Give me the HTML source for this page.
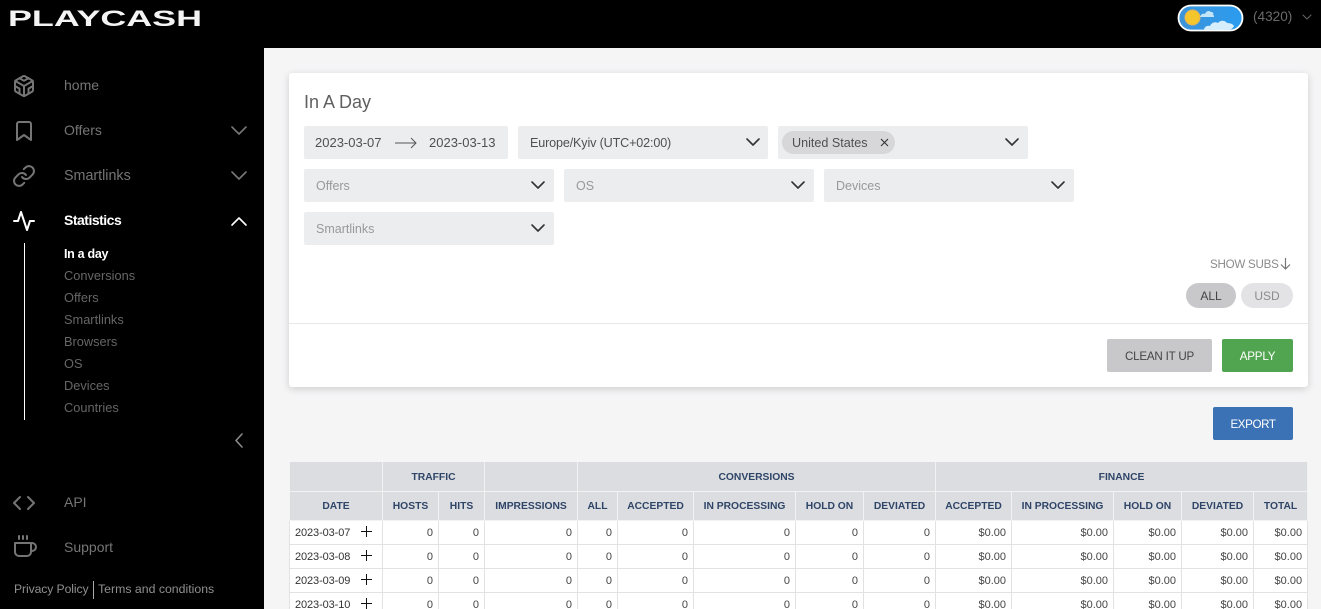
<!DOCTYPE html>
<html lang="en">
<head>
<meta charset="utf-8">
<title>PlayCash</title>
<style>
*{box-sizing:border-box}
html,body{margin:0;padding:0;width:1321px;height:609px;overflow:hidden;background:#f5f5f6;font-family:"Liberation Sans",sans-serif;color:#444}
#wrap{position:relative;width:1321px;height:609px;overflow:hidden;background:#f5f5f6}
.t{position:absolute;white-space:nowrap;line-height:16px;height:16px}
.a{position:absolute}
#top{left:0;top:0;width:1321px;height:48px;background:#000}
#side{left:0;top:0;width:264px;height:609px;background:#000}
.nav{font-size:14px;color:#757575;left:64px}
.sub{font-size:12.8px;color:#666;left:64px}
svg{position:absolute;overflow:visible}
.ic{fill:none;stroke:#757575;stroke-width:2;stroke-linecap:round;stroke-linejoin:round}
.chev{fill:none;stroke-width:1.6;stroke-linecap:round;stroke-linejoin:round}
#card{left:289px;top:73px;width:1019px;height:314px;background:#fff;border-radius:3px;box-shadow:0 2px 8px rgba(0,0,0,.16)}
.f{position:absolute;background:#ecedef;border-radius:2px;height:33px}
.ph{font-size:12.5px;color:#999}
.val{font-size:12.6px;color:#505050}
.btn{position:absolute;border-radius:2px;height:33px;font-size:11.6px;line-height:33px;text-align:center;padding-top:1px;letter-spacing:-.2px}
#tb{position:absolute;left:289px;top:462px;width:1018px;border-collapse:collapse;table-layout:fixed;font-size:11px}
#tb th{background:#dcdde0;color:#2f4568;font-weight:700;font-size:10.3px;height:29px;padding:1px 0 0;border:1px solid #f2f2f3;border-top:0;text-align:center;white-space:nowrap}
#tb tr:first-child th{padding-top:2px}
#tb td{background:#fff;color:#444;height:24px;padding:2px 5px 0 0;border:1px solid #e2e2e4;border-top:0;text-align:right;white-space:nowrap;font-size:11px}
#tb td.d{text-align:left;padding-left:5px;position:relative;color:#333;letter-spacing:-.1px}
.p{position:absolute;left:71px;top:5px;width:11px;height:11px}
.p:before{content:"";position:absolute;left:0;top:5px;width:11px;height:1.3px;background:#111}
.p:after{content:"";position:absolute;left:5px;top:0;width:1.3px;height:11px;background:#111}
</style>
</head>
<body>
<div id="wrap">
<div class="a" id="top"></div>
<div class="a" id="side"></div>

<svg style="left:0;top:0" width="220" height="36">
<text x="8" y="26" font-family="Liberation Sans" font-weight="700" font-size="22" fill="#f4f4f4" textLength="194" lengthAdjust="spacingAndGlyphs">PLAYCASH</text>
</svg>

<!-- toggle -->
<svg style="left:1177px;top:4px" width="67" height="28" viewBox="0 0 67 28">
<defs><linearGradient id="g" x1="0" x2="1" y1="0" y2="0"><stop offset="0" stop-color="#3d93d8"/><stop offset="1" stop-color="#2b9cf0"/></linearGradient></defs>
<rect x="1.5" y="1.5" width="64" height="25" rx="12.5" fill="url(#g)" stroke="#fff" stroke-width="1.8"/>
<circle cx="15.5" cy="13.5" r="7.5" fill="#f5c62c" stroke="#e6b458" stroke-width="1"/>
<path d="M23 13c1-3 3-4 5-3 1-3 4-4 6-2 2 0 3 1 2 3 1 0 1 1 1 2z" fill="#c4e5f8"/>
<path d="M27 26c0-3 3-5 6-4 1-3 5-5 8-3 2-3 7-3 9 0 3 0 6 1 7 3-1 2-3 4-6 4z" fill="#d6eefb"/>
</svg>
<div class="t" style="left:1253px;top:9px;font-size:13.6px;color:#6a6a6a">(4320)</div>
<svg style="left:1302px;top:14px" width="10" height="7"><path d="M1 1l4 4 4-4" class="chev" stroke="#666" style="stroke-width:1"/></svg>

<!-- nav -->
<svg class="ic" style="left:12px;top:74px" width="24" height="24" viewBox="0 0 24 24"><path d="M21 16V8a2 2 0 0 0-1-1.73l-7-4a2 2 0 0 0-2 0l-7 4A2 2 0 0 0 3 8v8a2 2 0 0 0 1 1.73l7 4a2 2 0 0 0 2 0l7-4A2 2 0 0 0 21 16z"/><path d="M7.5 4.21L12 6.81l4.5-2.6M7.5 19.79V14.6L3 12M21 12l-4.5 2.6v5.19M3.27 6.96L12 12.01l8.73-5.05M12 22.08V12"/></svg>
<div class="t nav" style="top:77px">home</div>

<svg class="ic" style="left:12px;top:119px" width="24" height="24" viewBox="0 0 24 24"><path d="M19 21l-7-5-7 5V5a2 2 0 0 1 2-2h10a2 2 0 0 1 2 2z"/></svg>
<div class="t nav" style="top:122px">Offers</div>
<svg style="left:231px;top:126px" width="16" height="10"><path d="M1 1l7 7 7-7" class="chev" stroke="#777"/></svg>

<svg class="ic" style="left:12px;top:164px" width="24" height="24" viewBox="0 0 24 24"><path d="M10 13a5 5 0 0 0 7.54.54l3-3a5 5 0 0 0-7.07-7.07l-1.72 1.71"/><path d="M14 11a5 5 0 0 0-7.54-.54l-3 3a5 5 0 0 0 7.07 7.07l1.71-1.71"/></svg>
<div class="t nav" style="top:168px;font-size:14.3px">Smartlinks</div>
<svg style="left:231px;top:171px" width="16" height="10"><path d="M1 1l7 7 7-7" class="chev" stroke="#777"/></svg>

<svg class="ic" style="left:12px;top:209px;stroke:#fff" width="24" height="24" viewBox="0 0 24 24"><path d="M22 12h-4l-3 9L9 3l-3 9H2"/></svg>
<div class="t nav" style="top:212px;color:#fff;font-weight:700;letter-spacing:-.5px">Statistics</div>
<svg style="left:231px;top:216px" width="16" height="10"><path d="M1 9l7-7 7 7" class="chev" stroke="#fff"/></svg>

<div class="a" style="left:24px;top:243px;width:1px;height:177px;background:#fff"></div>
<div class="t sub" style="top:246px;color:#fff;font-weight:700;font-size:12.5px;letter-spacing:-.3px">In a day</div>
<div class="t sub" style="top:268px">Conversions</div>
<div class="t sub" style="top:290px">Offers</div>
<div class="t sub" style="top:312px">Smartlinks</div>
<div class="t sub" style="top:334px">Browsers</div>
<div class="t sub" style="top:356px">OS</div>
<div class="t sub" style="top:378px">Devices</div>
<div class="t sub" style="top:400px">Countries</div>

<svg style="left:234px;top:433px" width="10" height="15"><path d="M8 1L2 7.5 8 14" class="chev" stroke="#8a8a8a"/></svg>

<svg class="ic" style="left:12px;top:491px" width="24" height="24" viewBox="0 0 24 24"><path d="M16 18l6-6-6-6M8 6l-6 6 6 6"/></svg>
<div class="t nav" style="top:494px">API</div>
<svg class="ic" style="left:13px;top:535px" width="24" height="24" viewBox="0 0 24 24"><path d="M18 8h1a4 4 0 0 1 0 8h-1"/><path d="M2 8h16v9a4 4 0 0 1-4 4H6a4 4 0 0 1-4-4V8z"/><path d="M6 1v3M10 1v3M14 1v3"/></svg>
<div class="t nav" style="top:539px">Support</div>

<div class="t" style="left:14px;top:581px;font-size:12.2px;color:#8f8f8f;letter-spacing:-.1px">Privacy Policy</div>
<div class="a" style="left:93px;top:581px;width:1px;height:18px;background:#aaa"></div>
<div class="t" style="left:98px;top:581px;font-size:12.3px;color:#8f8f8f">Terms and conditions</div>

<!-- card -->
<div class="a" id="card"></div>
<div class="t" style="left:304px;top:94px;font-size:18px;color:#606060">In A Day</div>

<div class="f" style="left:304px;top:126px;width:204px"></div>
<div class="t val" style="left:315px;top:135px;font-size:13px">2023-03-07</div>
<svg style="left:394px;top:136px" width="24" height="14"><path d="M1 7h21M17 2l5 5-5 5" fill="none" stroke="#555" stroke-width="1"/></svg>
<div class="t val" style="left:429px;top:135px;font-size:13px">2023-03-13</div>

<div class="f" style="left:518px;top:126px;width:250px"></div>
<div class="t val" style="left:530px;top:135px;letter-spacing:-.15px">Europe/Kyiv (UTC+02:00)</div>
<svg style="left:746px;top:138px" width="14" height="9"><path d="M1 1l6 6 6-6" class="chev" stroke="#333"/></svg>

<div class="f" style="left:778px;top:126px;width:250px"></div>
<div class="a" style="left:782px;top:131px;width:113px;height:23px;border-radius:12px;background:#d7d7d9"></div>
<div class="t val" style="left:792px;top:135px">United States</div>
<svg style="left:880px;top:138px" width="9" height="9"><path d="M1 1l7 7M8 1L1 8" fill="none" stroke="#333" stroke-width="1.1"/></svg>
<svg style="left:1005px;top:138px" width="14" height="9"><path d="M1 1l6 6 6-6" class="chev" stroke="#333"/></svg>

<div class="f" style="left:304px;top:169px;width:250px"></div>
<div class="t ph" style="left:316px;top:178px">Offers</div>
<svg style="left:531px;top:181px" width="14" height="9"><path d="M1 1l6 6 6-6" class="chev" stroke="#333"/></svg>

<div class="f" style="left:564px;top:169px;width:250px"></div>
<div class="t ph" style="left:576px;top:178px">OS</div>
<svg style="left:791px;top:181px" width="14" height="9"><path d="M1 1l6 6 6-6" class="chev" stroke="#333"/></svg>

<div class="f" style="left:824px;top:169px;width:250px"></div>
<div class="t ph" style="left:836px;top:178px">Devices</div>
<svg style="left:1051px;top:181px" width="14" height="9"><path d="M1 1l6 6 6-6" class="chev" stroke="#333"/></svg>

<div class="f" style="left:304px;top:212px;width:250px"></div>
<div class="t ph" style="left:316px;top:221px">Smartlinks</div>
<svg style="left:531px;top:224px" width="14" height="9"><path d="M1 1l6 6 6-6" class="chev" stroke="#333"/></svg>

<div class="t" style="left:1210px;top:257px;font-size:11.6px;color:#8a8a8a;letter-spacing:-.25px">SHOW SUBS</div>
<svg style="left:1280px;top:258px" width="11" height="12"><path d="M5.5 0v11M1 6.5l4.5 4.5L10 6.5" fill="none" stroke="#777" stroke-width="1.2"/></svg>

<div class="a" style="left:1186px;top:283px;width:50px;height:25px;border-radius:13px;background:#c8c8ca;text-align:center;line-height:26px;font-size:12px;color:#444">ALL</div>
<div class="a" style="left:1241px;top:283px;width:52px;height:25px;border-radius:13px;background:#e3e3e5;text-align:center;line-height:26px;font-size:12px;color:#8a8a90">USD</div>

<div class="a" style="left:289px;top:323px;width:1019px;height:1px;background:#e8e8e8"></div>

<div class="btn" style="left:1107px;top:339px;width:105px;background:#c8c8ca;color:#444">CLEAN IT UP</div>
<div class="btn" style="left:1222px;top:339px;width:71px;background:#52a550;color:#fff">APPLY</div>
<div class="btn" style="left:1213px;top:407px;width:80px;background:#3b71b5;color:#fff;letter-spacing:-.4px">EXPORT</div>

<!-- table -->
<table id="tb">
<colgroup>
<col style="width:93px"><col style="width:56px"><col style="width:46px"><col style="width:93px"><col style="width:40px"><col style="width:76px"><col style="width:102px"><col style="width:68px"><col style="width:72px"><col style="width:76px"><col style="width:102px"><col style="width:68px"><col style="width:72px"><col style="width:54px">
</colgroup>
<tr><th></th><th colspan="2">TRAFFIC</th><th></th><th colspan="5">CONVERSIONS</th><th colspan="5">FINANCE</th></tr>
<tr><th>DATE</th><th>HOSTS</th><th>HITS</th><th>IMPRESSIONS</th><th>ALL</th><th>ACCEPTED</th><th>IN PROCESSING</th><th>HOLD ON</th><th>DEVIATED</th><th>ACCEPTED</th><th>IN PROCESSING</th><th>HOLD ON</th><th>DEVIATED</th><th>TOTAL</th></tr>
<tr><td class="d">2023-03-07<span class="p"></span></td><td>0</td><td>0</td><td>0</td><td>0</td><td>0</td><td>0</td><td>0</td><td>0</td><td>$0.00</td><td>$0.00</td><td>$0.00</td><td>$0.00</td><td>$0.00</td></tr>
<tr><td class="d">2023-03-08<span class="p"></span></td><td>0</td><td>0</td><td>0</td><td>0</td><td>0</td><td>0</td><td>0</td><td>0</td><td>$0.00</td><td>$0.00</td><td>$0.00</td><td>$0.00</td><td>$0.00</td></tr>
<tr><td class="d">2023-03-09<span class="p"></span></td><td>0</td><td>0</td><td>0</td><td>0</td><td>0</td><td>0</td><td>0</td><td>0</td><td>$0.00</td><td>$0.00</td><td>$0.00</td><td>$0.00</td><td>$0.00</td></tr>
<tr><td class="d">2023-03-10<span class="p"></span></td><td>0</td><td>0</td><td>0</td><td>0</td><td>0</td><td>0</td><td>0</td><td>0</td><td>$0.00</td><td>$0.00</td><td>$0.00</td><td>$0.00</td><td>$0.00</td></tr>
</table>
</div>
</body>
</html>
